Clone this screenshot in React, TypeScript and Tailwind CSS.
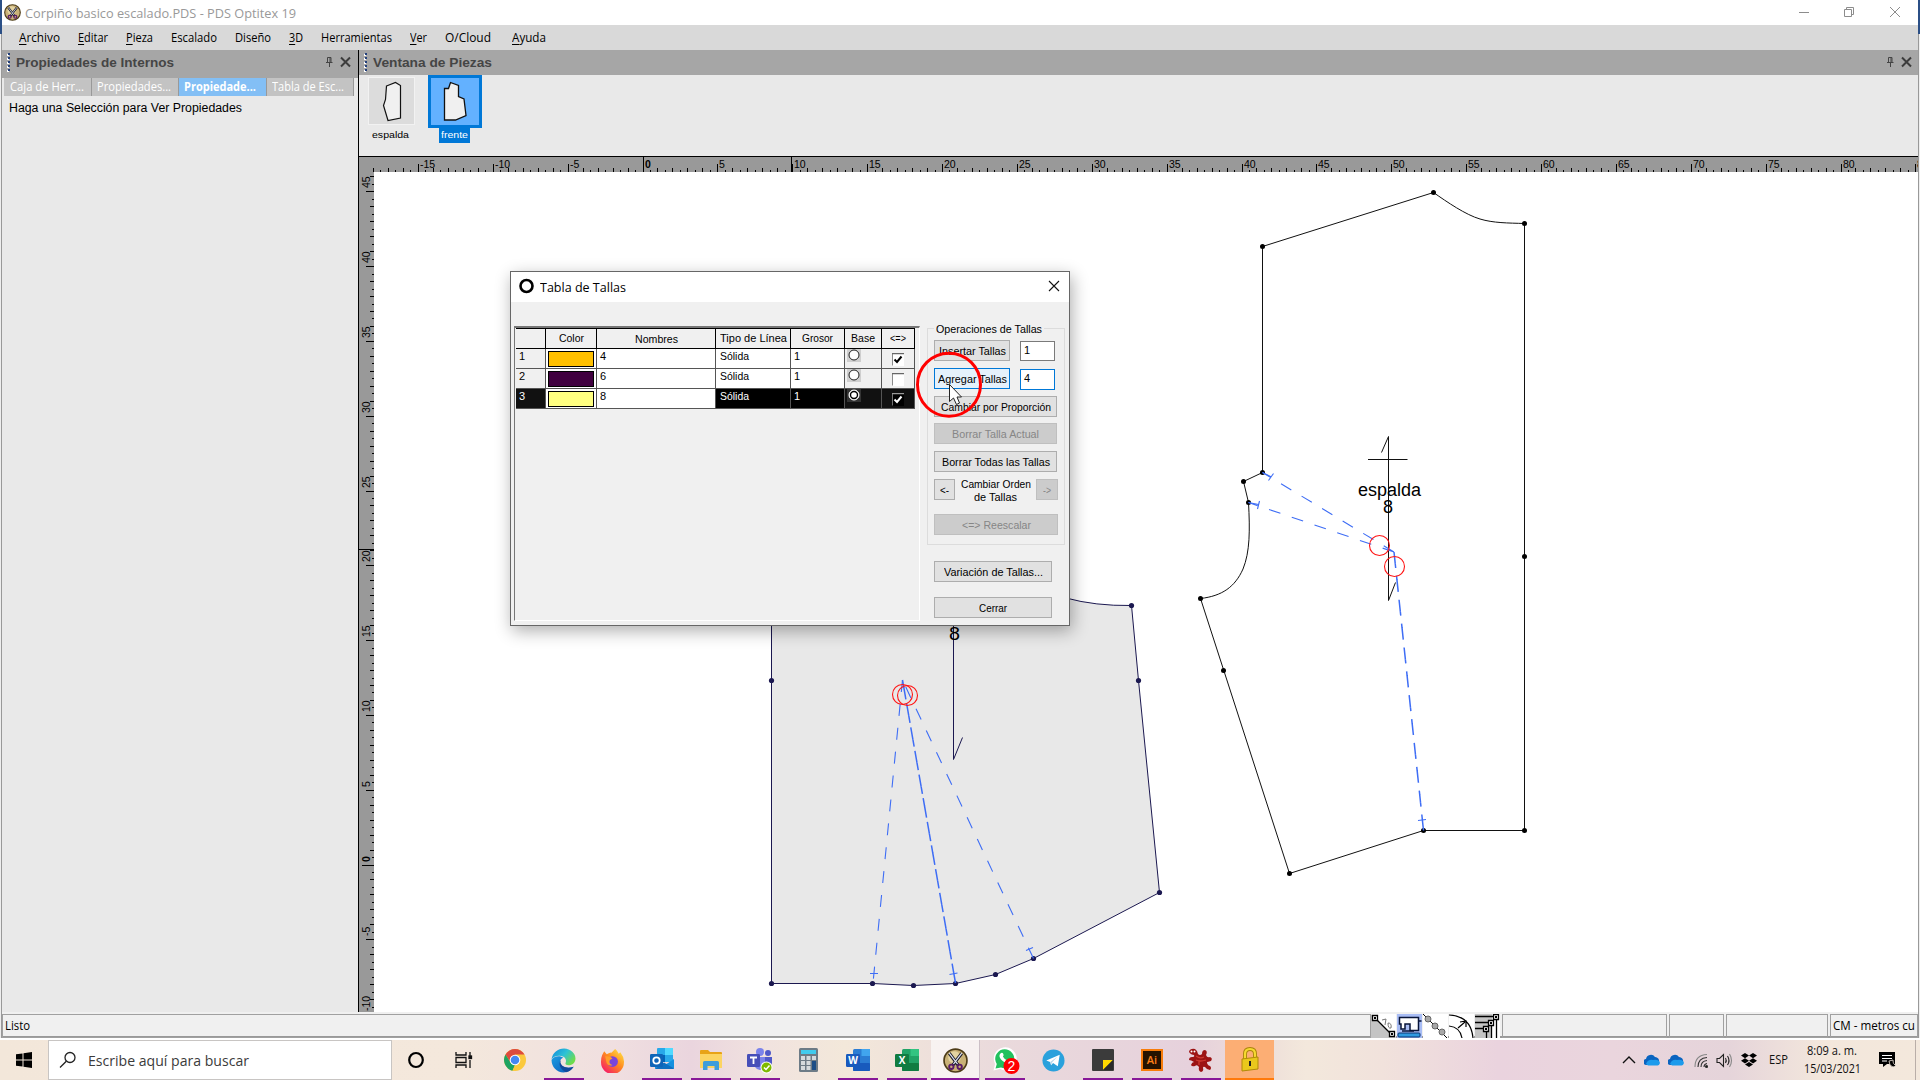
import React, { useLayoutEffect, useRef, useState } from 'react';

/** Single line of text squeezed or stretched horizontally to a given width. */
function Fit({ w, children, className = '' }: { w: number; children: React.ReactNode; className?: string }) {
  const ref = useRef<HTMLSpanElement>(null);
  const [k, setK] = useState(1);
  useLayoutEffect(() => {
    if (ref.current && ref.current.offsetWidth) setK(w / ref.current.getBoundingClientRect().width);
  }, []);
  return (
    <span className={'block shrink-0 text-left ' + className} style={{ width: w }}>
      <span ref={ref} className="inline-block origin-left whitespace-nowrap" style={{ transform: `scaleX(${k})` }}>
        {children}
      </span>
    </span>
  );
}

function ScissorsLogo({ s }: { s: number }) {
  return (
    <svg width={s} height={s} viewBox="0 0 24 24">
      <circle cx="12" cy="12" r="11" fill="#c9b177" stroke="#4d3c18" strokeWidth="1.6" />
      <circle cx="11" cy="9" r="6" fill="#eadcab" opacity=".8" />
      <path d="M6 5 15 17M18 5 9 17" stroke="#1d1d2b" strokeWidth="3" />
      <path d="M6 5 14 15.5M18 5 10 15.5" stroke="#dfe5f5" strokeWidth="1.1" />
      <circle cx="8" cy="18" r="2.1" fill="none" stroke="#581a68" strokeWidth="1.8" />
      <circle cx="16" cy="18" r="2.1" fill="none" stroke="#581a68" strokeWidth="1.8" />
    </svg>
  );
}

function TitleBar() {
  return (
    <div className="flex h-[25px] items-center bg-white pl-[2px]">
      <ScissorsLogo s={17} />
      <Fit w={271} className="ml-[4px] font-['Open_Sans','Noto_Sans',sans-serif] text-[13px] leading-5 text-[#999]">
        Corpiño basico escalado.PDS - PDS Optitex 19
      </Fit>
      <svg className="-mt-[2px] ml-auto mr-[14px]" width="106" height="16" fill="none" stroke="#8c8c8c">
        <path d="M1 8.500h10M46.500 5.500h7v7h-7zM48.500 5.500v-2h7v7h-2M92 3l10 10M102 3l-10 10" />
      </svg>
    </div>
  );
}

const MENUS: [string, string, number][] = [
  ['A', 'rchivo', 41],
  ['E', 'ditar', 30],
  ['P', 'ieza', 27],
  ['', 'Escalado', 46],
  ['', 'Diseño', 36],
  ['3', 'D', 14],
  ['', 'Herramientas', 71],
  ['V', 'er', 17],
  ['', 'O/Cloud', 46],
  ['A', 'yuda', 34],
];

function MenuBar() {
  return (
    <div className="flex h-[25px] items-center gap-[18px] bg-[#d9d9d9] pl-[4px] font-['Open_Sans','Noto_Sans',sans-serif] text-[12px] text-black">
      <svg className="-mr-[5px] -mt-[6px] w-0 overflow-visible" width="4" height="12">
        <path d="M2 0v12" stroke="#000" strokeWidth="2" strokeDasharray="2 2" />
      </svg>
      {MENUS.map(([u, rest, w]) => (
        <Fit key={u + rest} w={w} className={rest === 'yuda' ? 'ml-[3px]' : ''}>
          <span className="underline underline-offset-2">{u}</span>
          {rest}
        </Fit>
      ))}
    </div>
  );
}

function PanelHeader({ title, w, h }: { title: string; w: number; h: string }) {
  return (
    <div className={'flex items-center bg-[#a6a6a6] pl-[5px] ' + h}>
      <svg width="4" height="19">
        <path d="M1 1v18" stroke="#fff" strokeWidth="2" strokeDasharray="2 2" />
        <path d="M2 0v18" stroke="#23407c" strokeWidth="2" strokeDasharray="2 2" />
      </svg>
      <Fit w={w} className="ml-[5px] font-['Liberation_Sans',Arial,sans-serif] text-[13px] font-bold text-[#454545]">
        {title}
      </Fit>
      <svg className="-mt-[2px] ml-auto" width="26" height="12" fill="none" stroke="#444">
        <path d="M2.500 1.500h3.500v5h-3.500zM1 6.500h6.500M4.500 7v4M5 2v4" strokeWidth="1" />
        <path d="M16 1.500l9 9M25 1.500l-9 9" stroke="#3c3c3c" strokeWidth="2" />
      </svg>
    </div>
  );
}

const TABS: [string, number, boolean][] = [
  ['Caja de Herr...', 74, false],
  ['Propiedades...', 74, false],
  ['Propiedade...', 72, true],
  ['Tabla de Esc...', 72, false],
];

function LeftPanel() {
  return (
    <div className="flex w-[356px] shrink-0 flex-col bg-[#e9e9e9]">
      <PanelHeader title="Propiedades de Internos" w={158} h="h-[28px] pb-[3px] pr-[7px]" />
      <div className="flex h-[18px] pl-[2px] font-['Open_Sans','Noto_Sans',sans-serif] text-[12px] leading-[17px] text-white">
        {TABS.map(([t, w, on], i) => (
          <div
            key={i}
            className={
              'w-[87.5px] border-r border-[#999] ' +
              (i === 0 ? 'pl-[6px] ' : 'pl-[5px] ') +
              (on ? 'bg-[#83bff5] font-bold' : 'bg-[#c3c3c3]')
            }
          >
            <Fit w={w}>{t}</Fit>
          </div>
        ))}
      </div>
      <Fit w={233} className="ml-[7px] mt-[3px] font-['Liberation_Sans',Arial,sans-serif] text-[12px] leading-[18px] text-black">
        Haga una Selección para Ver Propiedades
      </Fit>
    </div>
  );
}

function Thumbs() {
  return (
    <div className="flex h-[82px] border-b border-black bg-[#e9e9e9] pl-[9px] font-['Liberation_Sans',Arial,sans-serif] text-[9.500px] leading-[14px]">
      <div className="mt-[2px] flex w-[47px] flex-col">
        <svg width="47" height="48">
          <rect x=".5" y=".5" width="46" height="47" fill="#dcdcdc" stroke="#f2f2f2" />
          <path d="M18.500 9 27.500 5.500 32.500 8.500V41L20 43.500 15.500 28.500 17.500 22.500z" fill="#f0f0f0" stroke="#111" strokeWidth="1.200" />
        </svg>
        <Fit w={37} className="ml-[4px] mt-[3px]">espalda</Fit>
      </div>
      <div className="ml-[13px] flex w-[54px] flex-col">
        <svg width="54" height="53">
          <rect x="1.500" y="1.500" width="51" height="50" fill="#63b1ff" stroke="#0078d7" strokeWidth="3" />
          <path d="M16.500 13.500H20.500L22.500 7.500 30.500 10.500V21.500L36 24 38 40.500 27.500 45H16.500z" fill="#f0f0f0" stroke="#111" strokeWidth="1.300" />
        </svg>
        <div className="ml-[11px] h-[15px] w-[31px] bg-[#0078d7] px-[2px] text-white">
          <Fit w={27}>frente</Fit>
        </div>
      </div>
    </div>
  );
}

const RULER_TEXT = "font-['Liberation_Sans',Arial,sans-serif] text-[10.500px]";

function TopRuler() {
  const u = 14.975;
  const ticks = [];
  for (let h = -36; h <= 170; h++) {
    const x = Math.round(283.5 + (h / 2) * u) + 0.5;
    if (x < 14) continue;
    const len = h % 10 === 0 ? 8 : h % 2 === 0 ? 4 : 2;
    ticks.push(<path key={h} d={`M${x} 15v-${len}`} />);
  }
  return (
    <svg className="block h-[15px] w-full shrink-0 bg-[#999]" stroke="#000">
      {ticks}
      <path d="M284.500 0v15M432.500 0v15" />
      <g stroke="none" className={RULER_TEXT}>
        {Array.from({ length: 21 }, (_, i) => (i - 3) * 5).map((n) => (
          <text key={n} x={Math.round(283.5 + n * u) + 2} y="10.500" fontWeight={n === 0 ? 'bold' : 'normal'}>
            {n}
          </text>
        ))}
      </g>
    </svg>
  );
}

function SideRuler() {
  const u = 14.96;
  const ticks = [];
  for (let h = -20; h <= 92; h++) {
    const y = Math.round(692.5 - (h / 2) * u) + 0.5;
    const len = h === 0 ? 12 : h % 10 === 0 ? 8 : h % 2 === 0 ? 4 : 2;
    ticks.push(<path key={h} d={`M15 ${y}h-${len}`} />);
  }
  return (
    <svg className="block h-[840px] w-[15px] shrink-0 bg-[#999]" stroke="#000">
      {ticks}
      <path d="M0 377.500h15" />
      <g stroke="none" className={RULER_TEXT}>
        {Array.from({ length: 12 }, (_, i) => (i - 2) * 5).map((n) => (
          <text
            key={n}
            transform={`translate(10.500 ${Math.round(692.5 - n * u) - 3}) rotate(-90)`}
            fontWeight={n === 0 ? 'bold' : 'normal'}
          >
            {n}
          </text>
        ))}
      </g>
    </svg>
  );
}

const FRONT_DOTS = [
  [771.5, 983.5], [872.5, 983.5], [913.5, 985.5], [955.5, 983.5], [995.5, 974.5], [1033.5, 958.5],
  [1159.5, 892.5], [1138.5, 680.5], [1131.5, 605.5], [771.5, 680.5],
];
const BACK_DOTS = [
  [1262.5, 246.5], [1433.5, 192.5], [1524.5, 223.5], [1524.5, 556.5], [1524.5, 830.5], [1423.5, 830.5],
  [1289.5, 873.5], [1223.5, 670.5], [1200.5, 598.5], [1248.5, 502.5], [1243.5, 481.5], [1262.5, 472.5],
];

function Drawing() {
  return (
    <svg className="block min-w-0 flex-1 bg-white" viewBox="374 172 1543 840" preserveAspectRatio="xMinYMin" fill="none">
      <path
        d="M771.500 500V983.500H872.500L913.500 985.500 955.500 983.500 995.500 974.500 1033.500 958.500 1159.500 892.500 1138.500 680.500 1131.500 605.500Q1095 606 1066 598V500z"
        fill="#e8e8e8"
        stroke="#1b1850"
      />
      <path d="M953.500 560V759.500L962.500 737.500" stroke="#1b1850" />
      <g fill="#1b1850">{FRONT_DOTS.map(([x, y]) => <circle key={x + '-' + y} cx={x} cy={y} r="2.600" />)}</g>
      <path
        d="M1262.500 246.500 1433.500 192.500C1447 202 1466 215 1480 219 1493 223 1508 223 1524.500 223.500V830.500H1423.500L1289.500 873.500 1200.500 598.500C1222 596 1235 587 1243 569 1250 552 1250 530 1248.500 502.500L1243.500 481.500 1262.500 472.500z"
        stroke="#111"
      />
      <g fill="#000">{BACK_DOTS.map(([x, y]) => <circle key={x + '-' + y} cx={x} cy={y} r="2.500" />)}</g>
      <path d="M1381.500 452.500 1388.500 436.500V600.500L1395.500 582.500M1368 459.500h39.500" stroke="#111" />
      <g stroke="#3e6df5" strokeWidth="1.100" strokeDasharray="12 12">
        <path d="M902.500 680 873 983M1033.500 958.500 902.500 680" />
        <path d="M1394 552 1262.500 472.500M1394 552 1248.500 502.500" />
      </g>
      <g stroke="#3e6df5" strokeWidth="1.500" strokeDasharray="12 12">
        <path d="M902.500 680 955.500 983M955.500 983 902.500 680" />
        <path d="M1394 552 1423.500 830.500M1423.500 830.500 1394 552" />
      </g>
      <path
        d="M870 973.500h8M949.500 974.500l8-1.500M1026 950.500l7-3M1418 820.500l8-1M1268.500 480.500l5-7M1257.500 509l2-8M1262.500 472.500l9 4.500M1248.500 502.500l10 2"
        stroke="#3e6df5"
        strokeWidth="1.100"
      />
      <g stroke="#ff1414" strokeWidth="1.100">
        <circle cx="902.500" cy="694.500" r="10" />
        <circle cx="907.500" cy="695.500" r="10" />
        <circle cx="1379.500" cy="545.500" r="10" />
        <circle cx="1394.500" cy="566.500" r="10" />
      </g>
      <g fill="#000" className="font-['Liberation_Sans',Arial,sans-serif] text-[18px]">
        <text x="1358" y="496" textLength="63">espalda</text>
        <text x="1383" y="513">8</text>
        <text x="949" y="640" textLength="11" lengthAdjust="spacingAndGlyphs">8</text>
      </g>
    </svg>
  );
}

function Radio({ on, dark }: { on?: boolean; dark?: boolean }) {
  return (
    <svg className="block" width="14" height="13">
      <rect width="14" height="13" fill={dark ? '#333' : '#cfcfcf'} />
      <circle cx="7" cy="6" r="5" fill="#fff" stroke={dark ? '#fff' : '#222'} />
      {on && <circle cx="7" cy="6" r="3.500" fill="#fff" stroke="#000" strokeWidth="1.400" />}
    </svg>
  );
}

function Check({ on, dark }: { on?: boolean; dark?: boolean }) {
  return (
    <svg className="mt-[4px] block" width="12" height="13">
      <rect width="12" height="13" fill={dark ? '#000' : '#fff'} />
      <path d="M0 12.500V.5H12" fill="none" stroke={dark ? '#999' : '#666'} strokeWidth="1.500" />
      {on && <path d="M2.500 6.500 5 9 9.500 3.500" fill="none" stroke={dark ? '#fff' : '#000'} strokeWidth="2" />}
    </svg>
  );
}

const COLS = 'grid grid-cols-[30px_51px_119px_75px_54px_37px_33px]';
const HEADS: [string, number][] = [
  ['', 0], ['Color', 25], ['Nombres', 43], ['Tipo de Línea', 67], ['Grosor', 31], ['Base', 24], ['<=>', 16],
];
const ROWS = [
  { n: '1', c: 'bg-[#ffc000]', name: '4', base: false, chk: true, sel: false },
  { n: '2', c: 'bg-[#400040]', name: '6', base: false, chk: false, sel: false },
  { n: '3', c: 'bg-[#ffff80]', name: '8', base: true, chk: true, sel: true },
];

function SizeTable() {
  return (
    <div className="h-[295px] w-[406px] border-b border-l border-r border-t-2 border-b-white border-l-[#777] border-r-white border-t-[#777] pl-px">
      <div className={COLS + ' h-[21px]'}>
        {HEADS.map(([t, w], i) => (
          <div
            key={i}
            className={
              'flex justify-center border-b border-r border-t border-black bg-[#f0f0f0] ' + (i === 2 ? 'pt-[3px]' : 'pt-[2px]')
            }
          >
            {w > 0 && <Fit w={w}>{t}</Fit>}
          </div>
        ))}
      </div>
      {ROWS.map((r) => {
        const line = 'border-b border-r border-[#555] ';
        const dark = r.sel ? 'bg-black text-white ' : 'bg-white ';
        const side = r.sel ? 'bg-[#111] text-white ' : 'bg-[#f0f0f0] ';
        return (
          <div key={r.n} className={COLS + ' h-[20px]'}>
            <div className={line + side + 'pl-[3px]'}>{r.n}</div>
            <div className={line + 'bg-white px-[2px] pb-px pt-[2px]'}>
              <div className={'h-full border border-black ' + r.c} />
            </div>
            <div className={line + 'bg-white pl-[3px]'}>{r.name}</div>
            <div className={line + dark + 'pl-[4px]'}><Fit w={29}>Sólida</Fit></div>
            <div className={line + dark + 'pl-[3px]'}>1</div>
            <div className={line + side + 'pl-[2px]'}><Radio on={r.base} dark={r.sel} /></div>
            <div className={line + side + 'pl-[10px]'}><Check on={r.chk} dark={r.sel} /></div>
          </div>
        );
      })}
    </div>
  );
}

function Btn({ w, cls, kind = '', children }: { w: number; cls: string; kind?: 'off' | 'hot' | ''; children: React.ReactNode }) {
  const look =
    kind === 'off'
      ? 'border-[#bfbfbf] bg-[#cccccc] text-[#868686] '
      : kind === 'hot'
        ? 'border-[#0078d7] bg-[#e5f1fb] '
        : 'border-[#adadad] bg-[#e1e1e1] ';
  return (
    <div className={'flex h-[21px] items-center justify-center border pt-px ' + look + cls}>
      <Fit w={w}>{children}</Fit>
    </div>
  );
}

function Dialog() {
  return (
    <div className="absolute left-[510px] top-[271px] flex h-[355px] w-[560px] flex-col border border-[#666] bg-[#f0f0f0] shadow-[2px_5px_16px_rgba(0,0,0,0.32)]">
      <div className="flex h-[30px] items-center bg-white pl-[8px]">
        <svg className="-mt-[2px]" width="15" height="16">
          <circle cx="7.500" cy="8" r="6" fill="none" stroke="#000" strokeWidth="2.600" />
        </svg>
        <Fit w={86} className="ml-[6px] mt-[2px] font-['Open_Sans','Noto_Sans',sans-serif] text-[12px] text-black">
          Tabla de Tallas
        </Fit>
        <svg className="-mt-[2px] ml-auto mr-[9px]" width="12" height="12" stroke="#111" strokeWidth="1.100">
          <path d="M1 1l10 10M11 1 1 11" />
        </svg>
      </div>
      <div className="flex pl-[3px] pt-[24px] font-['Liberation_Sans',Arial,sans-serif] text-[11px] leading-[15px] text-black">
        <SizeTable />
        <div className="ml-[7px] mt-[2px] w-[138px]">
          <div className="relative flex h-[217px] flex-col border border-[#dcdcdc] pl-[6px] pt-[11px]">
            <div className="absolute -top-[7px] left-[6px] bg-[#f0f0f0] px-[2px]">
              <Fit w={106}>Operaciones de Tallas</Fit>
            </div>
            <div className="flex gap-[10px]">
              <Btn w={67} cls="w-[76px]">Insertar Tallas</Btn>
              <div className="mt-px h-[20px] w-[35px] border border-[#7a7a7a] bg-white pl-[3px] pt-px">1</div>
            </div>
            <div className="mt-[7px] flex gap-[10px]">
              <Btn w={69} cls="w-[76px]" kind="hot">Agregar Tallas</Btn>
              <div className="mt-px h-[21px] w-[35px] border border-[#0078d7] bg-white pl-[3px] pt-px">4</div>
            </div>
            <Btn w={110} cls="mt-[6px] w-[123px]">Cambiar por Proporción</Btn>
            <Btn w={87} cls="mt-[6px] w-[123px]" kind="off">Borrar Talla Actual</Btn>
            <Btn w={108} cls="mt-[7px] w-[123px]">Borrar Todas las Tallas</Btn>
            <div className="mt-[7px] flex w-[124px] justify-between">
              <Btn w={9} cls="w-[21px]">{'<-'}</Btn>
              <div className="-mt-px flex h-[22px] flex-col items-center leading-[13px]">
                <Fit w={70}>Cambiar Orden</Fit>
                <Fit w={43}>de Tallas</Fit>
              </div>
              <Btn w={8} cls="w-[22px]" kind="off">{'->'}</Btn>
            </div>
            <Btn w={69} cls="mt-[14px] w-[124px]" kind="off">{'<=> Reescalar'}</Btn>
          </div>
          <Btn w={99} cls="ml-[7px] mt-[16px] w-[118px]">Variación de Tallas...</Btn>
          <Btn w={28} cls="ml-[7px] mt-[15px] w-[118px]">Cerrar</Btn>
        </div>
      </div>
    </div>
  );
}

function Pointer() {
  return (
    <svg className="absolute left-[914px] top-[350px]" width="70" height="70" viewBox="914 350 70 70">
      <circle cx="949" cy="384.700" r="31.500" fill="none" stroke="#f00" strokeWidth="3" />
      <path d="M949.500 384.500V401.500L953.500 398 956.500 404.500 959.500 403 957 397H961.500z" fill="#fff" stroke="#222" />
    </svg>
  );
}

const TOOL = 'block h-[24px] w-[25px] overflow-hidden';

function StatusBar() {
  const box = 'h-[24px] border border-[#a0a0a0] ';
  return (
    <div className="flex h-[26px] items-start border-b-2 border-[#999] bg-[#f0f0f0] pt-[2px] font-['Open_Sans','Noto_Sans',sans-serif] text-[12px] leading-[22px] text-black">
      <div className={box + 'w-[1369px] pl-[2px]'}><Fit w={25}>Listo</Fit></div>
      <div className="flex w-[131px] gap-[1px]">
        <svg className={TOOL} fill="none" stroke="#000">
          <path d="M0 0 25 24H0z" fill="#c4c4c4" stroke="none" />
          <path d="M0 0H25V24z" fill="#fff" stroke="none" />
          <path d="M4 4 21 21" strokeWidth="1.300" />
          <path d="M1.500 1.500h5v5h-5zM18.500 17.500h5v5h-5z" fill="#fff" strokeWidth="1.300" />
          <path d="M3 3h2v2H3zM20 19h2v2h-2z" fill="#000" stroke="none" />
          <path d="M11 6l4-1-1 6M17 9q4 0 3 5-3 1-3-5" stroke="#777" />
        </svg>
        <svg className={TOOL} fill="none" stroke="#000">
          <rect width="25" height="24" fill="#a9bdf5" stroke="none" />
          <path d="M2.500 3.500h19v13H13V10H8v5H4v-5H2.500z" fill="#fff" stroke="#081539" strokeWidth="1.500" />
          <path d="M22 7h2.500M5 17h12" stroke="#081539" strokeWidth="1.500" />
          <rect x="1" y="19" width="22" height="4" rx="1" fill="#2f9ae0" stroke="#0b3570" />
        </svg>
        <svg className={TOOL} stroke="#000">
          <rect width="25" height="24" fill="#fff" stroke="none" />
          <path d="M0 0 24 24" />
          <g fill="#a8a8a8" stroke="#666">
            <circle cx="5" cy="5" r="3" />
            <circle cx="12" cy="12" r="3" />
            <circle cx="19" cy="18" r="3" />
          </g>
        </svg>
        <svg className={TOOL} fill="none" stroke="#000" strokeWidth="1.200">
          <rect width="25" height="24" fill="#fff" stroke="none" />
          <path d="M0 1Q22 2 24 24M0 12q11 1 13 12M9 14l7-6M11 8l6-1v6" />
        </svg>
        <svg className={TOOL} fill="none" stroke="#000" strokeWidth="1.300">
          <rect width="17" height="24" fill="#c4c4c4" stroke="none" />
          <path d="M17 0h8v24h-8z" fill="#fff" stroke="none" />
          <path d="M0 2.500h20M0 8.500h14M0 14.500h8M21.500 5v19M16.500 11v13M11.500 17v7" />
          <path d="M18.500.5h5v5h-5zM13.500 6.500h5v5h-5zM8.500 12.500h5v5h-5z" fill="#fff" />
          <path d="M20 2h2v2h-2zM15 8h2v2h-2zM10 14h2v2h-2z" fill="#000" stroke="none" />
        </svg>
      </div>
      <div className={box + 'w-[165px]'} />
      <div className={box + 'ml-[2px] w-[55px]'} />
      <div className={box + 'ml-[2px] w-[102px]'} />
      <div className={box + 'ml-[2px] flex-1 pl-[2px]'}><Fit w={82}>CM - metros cu</Fit></div>
    </div>
  );
}

function Office({ dark, mid, light, letter }: { dark: string; mid: string; light: string; letter: string }) {
  return (
    <svg width="26" height="24" viewBox="0 0 26 24">
      <rect x="8" y="1" width="17" height="22" rx="1.500" fill={mid} />
      <rect x="16.500" y="1" width="8.500" height="7" fill={light} />
      <rect x="8" y="15" width="17" height="8" rx="1" fill={dark} />
      <rect x="1" y="6" width="14" height="13" rx="1.200" fill={dark} />
      <text x="8" y="16" textAnchor="middle" fill="#fff" className="font-['Open_Sans',sans-serif] text-[10px] font-bold">{letter}</text>
    </svg>
  );
}

const APPS: { icon: React.ReactNode; line?: boolean; cell?: 'active' | 'alert' }[] = [
  { icon: <svg className="-ml-[2px]" width="20" height="20"><ellipse cx="10" cy="10" rx="6.800" ry="7" fill="none" stroke="#000" strokeWidth="2.200" /></svg> },
  { icon: <svg className="-ml-[3px]" width="18" height="18" fill="none" stroke="#111" strokeWidth="1.300"><path d="M1 1v3h10V1M1 17v-3h10v3M1 6.500h10v5H1zM15 1v4M15 9v8" /><rect x="14" y="5" width="2.500" height="2.500" fill="#111" /></svg> },
  { icon: (
    <svg width="24" height="24" viewBox="0 0 24 24">
      <circle cx="12" cy="12" r="11" fill="#fbc93d" />
      <path d="M2.500 6.500A11 11 0 0 1 21.500 6.500H12L7.500 14.500z" fill="#dd4b3e" />
      <path d="M2.500 6.500 7.500 14.500 12 17 9.500 22.700A11 11 0 0 1 2.500 6.500z" fill="#1da362" />
      <path d="M12 17 16.500 14.500 11 23 9.500 22.700z" fill="#fbc93d" />
      <circle cx="12" cy="12" r="5.300" fill="#fff" /><circle cx="12" cy="12" r="4.300" fill="#4587f3" />
    </svg>) },
  { line: true, icon: (
    <svg width="25" height="25" viewBox="0 0 24 24">
      <defs>
        <linearGradient id="eg" x1="0" x2="1" y1="0" y2=".6"><stop offset=".1" stopColor="#1592dc" /><stop offset=".55" stopColor="#2dc2d6" /><stop offset="1" stopColor="#6fdc4b" /></linearGradient>
        <linearGradient id="eb" x1="0" x2="1" y1="0" y2="1"><stop stopColor="#1b9de2" /><stop offset="1" stopColor="#0b58b8" /></linearGradient>
      </defs>
      <path d="M.5 11C1.500 4.500 6.500.5 12.500.5 19 .5 23.500 5.500 23.500 10 23.500 14 20.500 16.500 17 16.500 14.500 16.500 13.300 15.500 14 14.500 15.500 11 13 7.500 8 7.500 4.500 7.500 1.500 9 .5 11z" fill="url(#eg)" />
      <path d="M.5 11.500C2 8 8.500 6.500 12 9.500 9.500 9.500 8.300 12 9 14.500 10 18 15 20.500 21.700 18 19.500 21.500 16 23.500 12 23.500 5.500 23.500.5 18 .5 11.500z" fill="url(#eb)" />
      <path d="M9.300 11.500C7 15 8.500 20.500 14.500 23.200 17.500 22.500 20.300 20.500 21.700 18 15.500 20.300 9.800 18 9 14z" fill="#114a9c" />
    </svg>) },
  { icon: (
    <svg width="25" height="25" viewBox="0 0 24 24">
      <defs><linearGradient id="fg" x1="1" x2=".2" y1="0" y2="1"><stop stopColor="#fff04a" /><stop offset=".5" stopColor="#ff8a1f" /><stop offset="1" stopColor="#f5156c" /></linearGradient></defs>
      <path d="M2 7 4 3 6.500 6Q10 4 11 4.500L14.500 1C17 3 17.500 5 18 5.500L19.500 4Q23.500 9 23 14A11 11 0 0 1 1 14Q.8 10 2 7z" fill="url(#fg)" />
      <circle cx="12" cy="13" r="5.200" fill="#7845dc" />
      <path d="M5 8Q10 7.500 12 10L9.500 11.500Q8 15 12 16.500 7 18 6 13z" fill="#ff9d29" />
    </svg>) },
  { line: true, icon: (
    <svg width="26" height="26" viewBox="0 0 26 26">
      <rect x="8" y="1" width="16" height="14" rx="1" fill="#28a8ea" /><rect x="16" y="1" width="8" height="7" fill="#50d9ff" /><rect x="8" y="8" width="8" height="7" fill="#0364b8" />
      <path d="M6 12 16 18 25 12V21Q25 22 24 22H7Q6 22 6 21z" fill="#1490df" /><path d="M25 21.500 15 15.500 6 22H24z" fill="#0f6fc0" />
      <rect x="1" y="7" width="13" height="13" rx="1.200" fill="#0f64b8" />
      <circle cx="7.500" cy="13.500" r="3.200" fill="none" stroke="#fff" strokeWidth="1.800" />
    </svg>) },
  { line: true, icon: (
    <svg width="24" height="22" viewBox="0 0 24 22">
      <path d="M1 2Q1 1 2 1H9L11 3H22Q23 3 23 4V19H1z" fill="#e8a317" /><path d="M1 5H23V19H1z" fill="#fcd462" />
      <path d="M4 21V13.500Q4 12 5.500 12H18.500Q20 12 20 13.500V21H15.500V17H8.500V21z" fill="#3f9ddb" />
    </svg>) },
  { line: true, icon: (
    <svg width="27" height="27" viewBox="0 0 27 27">
      <circle cx="14" cy="5" r="4" fill="#7b83eb" /><circle cx="22" cy="6" r="3" fill="#5059c9" />
      <path d="M9 10H20V18A6 6 0 0 1 9 20z" fill="#7b83eb" /><path d="M19 10H26V16A5 5 0 0 1 19 20z" fill="#5059c9" />
      <rect x="1" y="7" width="13" height="13" rx="1.200" fill="#464eb8" /><path d="M4 10.500H11M7.500 10.500V17" stroke="#fff" strokeWidth="1.800" />
      <circle cx="20.500" cy="20.500" r="6" fill="#fff" /><circle cx="20.500" cy="20.500" r="5" fill="#7fba00" /><path d="M18 20.500 20 22.500 23.500 18.500" stroke="#fff" strokeWidth="1.500" fill="none" />
    </svg>) },
  { icon: (
    <svg width="19" height="24">
      <rect width="19" height="24" rx="1.500" fill="#6d7b86" /><rect x="2" y="2" width="15" height="4" fill="#41cbee" />
      <path d="M2 8h4v4H2zM7.500 8h4v4h-4zM13 8h4v4h-4zM2 13h4v4H2zM7.500 13h4v4h-4zM2 18h4v4H2zM7.500 18h4v4h-4z" fill="#d5dadd" /><path d="M13 13h4v9h-4z" fill="#1c4d86" />
    </svg>) },
  { line: true, icon: <Office dark="#185abd" mid="#2b7cd3" light="#41a5ee" letter="W" /> },
  { line: true, icon: <Office dark="#107c41" mid="#21a366" light="#33c481" letter="X" /> },
  { cell: 'active', line: true, icon: <ScissorsLogo s={25} /> },
  { line: true, icon: (
    <svg className="ml-[2px]" width="28" height="28" viewBox="0 0 28 28">
      <path d="M1.500 24.500 3 18A11.500 11.500 0 1 1 8 23z" fill="#fff" /><path d="M3.500 22.500 4.800 18A9.500 9.500 0 1 1 9 21.500z" fill="#22c15e" />
      <path d="M9 7q2-1 2.500 1.500.3 1.500-.6 2 1.500 3 4.500 4 1-1.500 2-1 2 1 1.500 2.500-2 3-6 .5-5-3-5.500-6.500Q7.500 8 9 7z" fill="#fff" />
      <circle cx="19.500" cy="20" r="8" fill="#f00" />
      <text x="19.500" y="25" textAnchor="middle" fill="#fff" className="font-['Liberation_Sans',sans-serif] text-[14px]">2</text>
    </svg>) },
  { icon: (
    <svg width="23" height="23" viewBox="0 0 24 24">
      <circle cx="12" cy="12" r="11.500" fill="#2aa1dc" /><path d="M4.500 12 18.500 6 16.500 18 11.500 14.500 9.500 17 8.500 13.500z" fill="#fff" /><path d="M8.500 13.500 16 8 10.500 14 9.500 17z" fill="#b8d7ea" />
    </svg>) },
  { line: true, icon: <svg width="22" height="22"><rect width="22" height="22" rx="1" fill="#3b3b3b" /><path d="M11 11H21L11 21z" fill="#ffd900" /><path d="M21 11v10H11z" fill="#2a2a2a" /></svg> },
  { line: true, icon: (
    <svg width="22" height="22"><rect x="1" y="1" width="20" height="20" fill="#261300" stroke="#f77c0b" strokeWidth="2" />
      <text x="11" y="15" textAnchor="middle" fill="#ff7f18" className="font-['Open_Sans',sans-serif] text-[11px] font-semibold">Ai</text></svg>) },
  { line: true, icon: (
    <svg width="25" height="24" viewBox="0 0 25 24">
      <path d="M1 3Q3 0 7 1 10 3 10 6 12 8 14 6 14 2 17 2 20 3 18 7 19 10 22 9 25 10 23 13 20 14 19 14 19 17 22 18 24 20 22 22 19 22 17 19 15 18 15 20 16 23 13 24 10 23 11 19 9 16 7 18 4 19 3 17 4 14 6 14 3 12 1 12 1 9 4 9 7 9 6 7 1 6 1 3z" fill="#9c1313" />
      <path d="M8 8Q12 11 16 9M8 12Q12 14 18 12M11 12v5" stroke="#cf3a30" strokeWidth="1.300" fill="none" />
      <circle cx="3.500" cy="3.500" r="1" fill="#fff" /><circle cx="6.500" cy="3.500" r="1" fill="#fff" />
    </svg>) },
  { cell: 'alert', icon: (
    <svg width="20" height="25" viewBox="0 0 20 25">
      <path d="M5 13V7Q5 2 10 2 15 2 15 7V10" fill="none" stroke="#a98409" strokeWidth="4" /><path d="M5 13V7Q5 2 10 2 15 2 15 7V10" fill="none" stroke="#f6d931" strokeWidth="2.200" />
      <path d="M2 12 18 10V22L2 24z" fill="#eac81c" stroke="#b08a08" /><path d="M10 14v5" stroke="#222" strokeWidth="2" />
    </svg>) },
];

function Taskbar() {
  return (
    <div className="mt-[2px] flex h-[40px] bg-[linear-gradient(90deg,#f3e7da_0,#f4e8dc_24%,#f0dfe0_32%,#ead5de_36%,#f1e3df_40%,#f3e8da_44%,#eadadc_52%,#e6d1dc_62%,#eedfd9_66%,#f3e8dc_68%,#f1e2dc_72%,#ead3de_78%,#ead5dd_84%,#e5d4da_90%,#f3e7dc_95%,#f3e8dc_100%)]">
      <div className="flex w-[48px] items-center justify-center">
        <svg width="16" height="16"><path d="M0 2.300 6.500 1.400V7.500H0zM7.500 1.200 16 0V7.500H7.500zM0 8.500H6.500V14.600L0 13.700zM7.500 8.500H16V16L7.500 14.800z" /></svg>
      </div>
      <div className="flex w-[344px] items-center border border-[#c8c5c3] bg-white pl-[10px]">
        <svg width="18" height="18" fill="none" stroke="#222" strokeWidth="1.300"><circle cx="11" cy="6.500" r="5" /><path d="M7.300 10.300 1 16.500" /></svg>
        <Fit w={161} className="ml-[11px] font-['Open_Sans','Noto_Sans',sans-serif] text-[15px] text-[#3b3b3b]">Escribe aquí para buscar</Fit>
      </div>
      {APPS.map((a, i) => (
        <div
          key={i}
          className={
            'relative flex w-[49px] shrink-0 items-center justify-center ' +
            (a.cell === 'active' ? 'border-r border-[#cbbfc6] bg-white/60' : a.cell === 'alert' ? 'border-b-2 border-[#ff7a0a] bg-[#fcae74]' : '')
          }
        >
          {a.icon}
          {a.line && <div className={'absolute bottom-0 h-[2px] bg-[#881798] ' + (a.cell ? 'left-0 w-full' : 'left-[5px] w-[40px]')} />}
        </div>
      ))}
      <div className="ml-auto mr-[4px] flex items-center border-r border-[#b9aea8] pr-[19px] font-['Open_Sans','Noto_Sans',sans-serif] text-[12px] text-[#111]">
        <svg width="14" height="14" fill="none" stroke="#111" strokeWidth="1.400"><path d="M1 10 7 4l6 6" /></svg>
        {[0, 1].map((k) => (
          <svg key={k} className="ml-[8px]" width="16" height="12">
            <path d="M3 11A3 3 0 0 1 2 5 5 5 0 0 1 11 3 4 4 0 0 1 15 8L14 11z" fill="#0a64c0" /><path d="M2 10Q4 5 9 6 15 5 16 9 15 12 13 11.500H4z" fill="#1c9bec" />
          </svg>
        ))}
        <svg className="ml-[10px]" width="14" height="15" fill="none" stroke="#333" strokeWidth="1.100">
          <path d="M1 14Q1 2 13 1.500" stroke="#888" /><path d="M4 14Q4 5 13 4.500M7 14Q7 8 13 7.500M10 14q0-3 3-3.500" /><circle cx="12.500" cy="13.500" r="1" fill="#111" />
        </svg>
        <svg className="ml-[8px]" width="17" height="15" fill="none" stroke="#222" strokeWidth="1.100">
          <path d="M1 5.500h2.500l4-4v12l-4-4H1zM9.500 5q1.500 2.500 0 5M11.500 3q3 4.500 0 9" /><path d="M13.500 1q4 6.500 0 13" stroke="#888" />
        </svg>
        <svg className="ml-[8px]" width="16" height="14"><path d="M4 0 8 2.600 4 5.200 0 2.600zM12 0l4 2.600-4 2.600-4-2.600zM4 5.200 8 7.800 4 10.400 0 7.800zM12 5.200l4 2.600-4 2.600-4-2.600zM8 8.900l4 2.500L8 14l-4-2.600z" /></svg>
        <Fit w={19} className="ml-[12px]">ESP</Fit>
        <div className="ml-[15px] flex w-[58px] flex-col items-center leading-[18px]">
          <Fit w={50}>8:09 a. m.</Fit>
          <Fit w={57}>15/03/2021</Fit>
        </div>
        <svg className="ml-[18px]" width="17" height="17">
          <path d="M0 0H16V12H8L4 15V12H0z" /><path d="M3 3.500h10M3 6.500h10M3 9h5" stroke="#fff" /><path d="M10 9q0 5 4 6 2 0 3-2-3 0-3-5z" stroke="#efe4dc" strokeWidth=".8" />
        </svg>
      </div>
    </div>
  );
}

export default function App() {
  return (
    <div className="relative flex h-[1080px] w-[1920px] flex-col overflow-hidden bg-white">
      <div className="flex h-[1038px]">
        <div className="flex w-[2px] flex-col">
          <div className="h-[34px] bg-[#2b4f86]" />
          <div className="flex-1 border-r border-[#999] bg-[#eee]" />
        </div>
        <div className="flex min-w-0 flex-1 flex-col">
          <TitleBar />
          <MenuBar />
          <div className="flex h-[962px]">
            <LeftPanel />
            <div className="flex min-w-0 flex-1 flex-col border-l border-black">
              <PanelHeader title="Ventana de Piezas" w={119} h="h-[25px] shrink-0 pr-[6px]" />
              <Thumbs />
              <TopRuler />
              <div className="flex h-[840px]">
                <SideRuler />
                <Drawing />
              </div>
            </div>
          </div>
          <StatusBar />
        </div>
        <div className="flex w-[2px] flex-col">
          <div className="h-[34px] bg-[#2b4f86]" />
          <div className="flex-1 border-l border-[#999] bg-[#eee]" />
        </div>
      </div>
      <Taskbar />
      <Dialog />
      <Pointer />
    </div>
  );
}
